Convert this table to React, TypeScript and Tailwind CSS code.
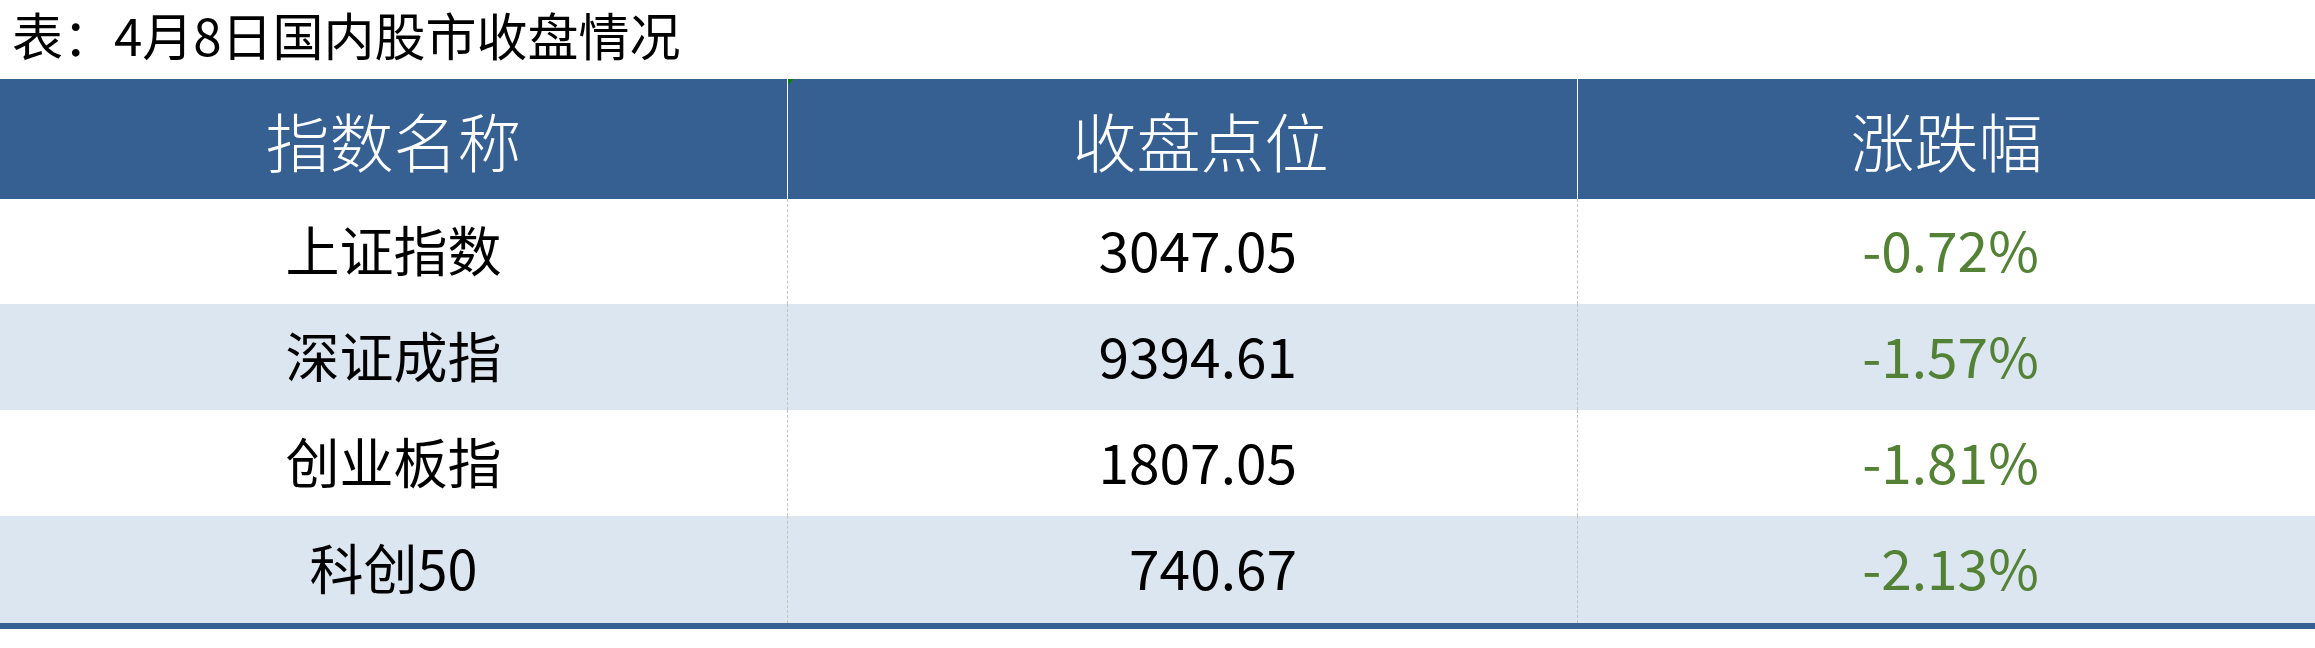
import React from "react";

const rows = [
  { name: "上证指数", close: "3047.05", chg: "-0.72%", alt: false, h: "h-[105px]" },
  { name: "深证成指", close: "9394.61", chg: "-1.57%", alt: true, h: "h-[106px]" },
  { name: "创业板指", close: "1807.05", chg: "-1.81%", alt: false, h: "h-[106px]" },
  { name: "科创50", close: "740.67", chg: "-2.13%", alt: true, h: "h-[107px]" },
];

const font = { fontFamily: '"Noto Sans CJK SC", "Noto Sans", sans-serif' };

export default function App() {
  return (
    <div className="w-[2315px] h-[648px] bg-white overflow-hidden" style={font}>
      <div className="h-[79px] pl-[12px] pt-[4px] text-[51px] leading-[60px] text-black whitespace-nowrap">
        表：4月8日国内股市收盘情况
      </div>
      <div className="grid grid-cols-[787px_790px_1fr] h-[120px] bg-[#376092] text-white text-[64px] font-light">
        <div className="flex items-center justify-center">指数名称</div>
        <div className="relative flex items-center justify-center pl-[36px] border-l border-white">
          <div className="absolute left-0 top-0 w-0 h-0 border-t-[6px] border-t-[#107c10] border-r-[6px] border-r-transparent" />
          收盘点位
        </div>
        <div className="flex items-center justify-center border-l border-white">涨跌幅</div>
      </div>
      {rows.map((r) => (
        <div
          key={r.name}
          className={`grid grid-cols-[787px_790px_1fr] ${r.h} ${r.alt ? "bg-[#dce6f1]" : "bg-white"}`}
        >
          <div className="flex items-center justify-center text-[54px] text-black pb-[6px]">{r.name}</div>
          <div className="flex items-center justify-end pr-[280px] text-[55px] text-black border-l border-dashed border-[#c4c4c4] pb-[6px]">
            {r.close}
          </div>
          <div className="flex items-center justify-center pl-[8px] text-[55px] text-[#538135] border-l border-dashed border-[#c4c4c4] pb-[6px]">
            {r.chg}
          </div>
        </div>
      ))}
      <div className="h-[6px] bg-[#376092]" />
    </div>
  );
}
